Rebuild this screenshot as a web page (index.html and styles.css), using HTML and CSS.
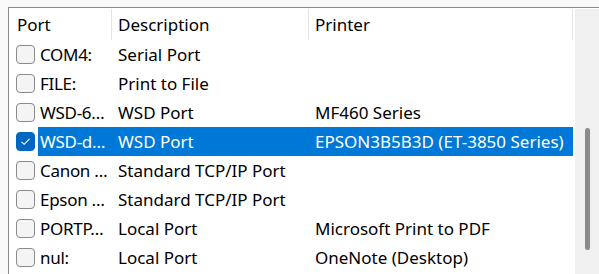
FILE: index.html
```html
<!DOCTYPE html>
<html>
<head>
<meta charset="utf-8">
<link rel="stylesheet" href="styles.css">
</head>
<body>
<div class="frame">
  <div class="list">
    <div class="header">
      <div class="hcell h1">Port</div>
      <div class="hcell h2">Description</div>
      <div class="hcell h3">Printer</div>
    </div>
    <div class="row"><span class="cb"></span><div class="cells"><span class="c1">COM4:</span><span class="c2">Serial Port</span><span class="c3"></span></div></div>
    <div class="row"><span class="cb"></span><div class="cells"><span class="c1">FILE:</span><span class="c2">Print to File</span><span class="c3"></span></div></div>
    <div class="row"><span class="cb"></span><div class="cells"><span class="c1">WSD-6…</span><span class="c2">WSD Port</span><span class="c3">MF460 Series</span></div></div>
    <div class="row"><span class="cb checked"><svg width="11" height="9" viewBox="0 0 11 9"><path d="M1.5 4.8 L4.2 7.3 L9.5 1.8" fill="none" stroke="#fff" stroke-width="1.1"/></svg></span><div class="cells selected"><span class="c1">WSD-d…</span><span class="c2">WSD Port</span><span class="c3">EPSON3B5B3D (ET-3850 Series)</span></div></div>
    <div class="row"><span class="cb"></span><div class="cells"><span class="c1">Canon …</span><span class="c2">Standard TCP/IP Port</span><span class="c3"></span></div></div>
    <div class="row"><span class="cb"></span><div class="cells"><span class="c1">Epson …</span><span class="c2">Standard TCP/IP Port</span><span class="c3"></span></div></div>
    <div class="row"><span class="cb"></span><div class="cells"><span class="c1">PORTP…</span><span class="c2">Local Port</span><span class="c3">Microsoft Print to PDF</span></div></div>
    <div class="row"><span class="cb"></span><div class="cells"><span class="c1">nul:</span><span class="c2">Local Port</span><span class="c3">OneNote (Desktop)</span></div></div>
  </div>
  <div class="scrollbar"><div class="thumb"></div></div>
</div>
</body>
</html>
```
FILE: styles.css
```css
html, body {
  margin: 0;
  padding: 0;
  background: #f9f9f9;
  overflow: hidden;
}
body {
  font-family: "Noto Sans", "Open Sans", sans-serif;
  font-size: 17px;
  color: #000;
}
.frame {
  margin: 7px 0 0 8px;
  border-top: 1px solid #8c8c8c;
  border-left: 1px solid #8c8c8c;
  background: #fff;
  display: flex;
  height: 270px;
}
.list {
  width: 566px;
  display: flex;
  flex-direction: column;
}
.header {
  display: flex;
  height: 32px;
}
.hcell {
  box-sizing: border-box;
  display: flex;
  align-items: center;
  border-right: 1px solid #e5e5e5;
  height: 31px;
  margin-top: 1px;
  white-space: nowrap;
}
.h1 { width: 103px; padding-left: 8px; }
.h2 { width: 197px; padding-left: 6px; }
.h3 { width: 264px; padding-left: 6px; }
.row {
  display: flex;
  align-items: center;
  height: 29px;
}
.cb {
  box-sizing: border-box;
  width: 19px;
  height: 19px;
  margin-left: 7px;
  border: 1px solid #8a8a8a;
  border-radius: 4px;
  background: #f4f4f4;
  display: flex;
  align-items: center;
  justify-content: center;
}
.cb.checked {
  background: #0067c0;
  border-color: #0067c0;
}
.cells {
  margin-left: 3px;
  display: flex;
  align-items: center;
  height: 29px;
  width: 535px;
  white-space: nowrap;
}
.cells.selected {
  background: #0078d7;
  color: #fff;
}
.c1 { width: 74px; padding-left: 2px; box-sizing: border-box; overflow: hidden; letter-spacing: -0.3px; }
.c2 { width: 196px; padding-left: 6px; box-sizing: border-box; }
.c3 { width: 265px; padding-left: 7px; box-sizing: border-box; }
.scrollbar {
  width: 24px;
  margin-top: 1px;
  background: #f0f0f0;
  display: flex;
  justify-content: center;
}
.thumb {
  width: 5px;
  height: 122px;
  margin-top: 119px;
  background: #8a8a8a;
  border-radius: 3px;
}
```
